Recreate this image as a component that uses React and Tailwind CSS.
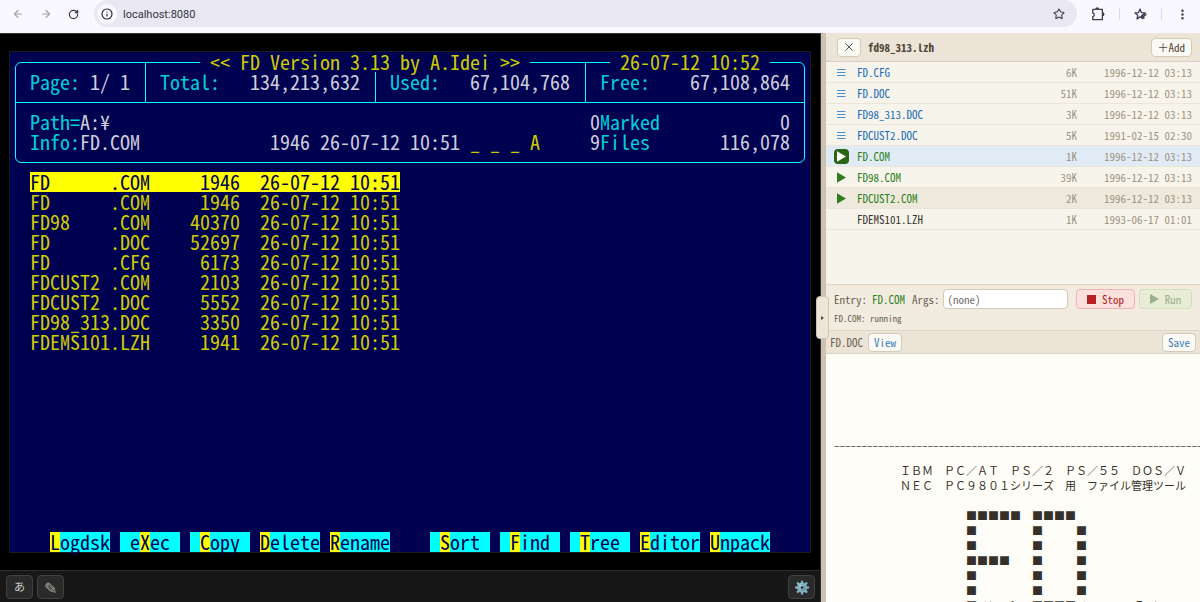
import React from "react";
import { ArrowLeft, ArrowRight, RotateCw, Info, Star, EllipsisVertical } from "lucide-react";

const archiveFiles = [
  { name: "FD.CFG", size: "6K", date: "1996-12-12 03:13", kind: "text" },
  { name: "FD.DOC", size: "51K", date: "1996-12-12 03:13", kind: "text" },
  { name: "FD98_313.DOC", size: "3K", date: "1996-12-12 03:13", kind: "text" },
  { name: "FDCUST2.DOC", size: "5K", date: "1991-02-15 02:30", kind: "text" },
  { name: "FD.COM", size: "1K", date: "1996-12-12 03:13", kind: "program", running: true },
  { name: "FD98.COM", size: "39K", date: "1996-12-12 03:13", kind: "program" },
  { name: "FDCUST2.COM", size: "2K", date: "1996-12-12 03:13", kind: "program", hovered: true },
  { name: "FDEMS101.LZH", size: "1K", date: "1993-06-17 01:01", kind: "other" },
];

const dosFiles = [
  ["FD", "COM", "1946"],
  ["FD", "COM", "1946"],
  ["FD98", "COM", "40370"],
  ["FD", "DOC", "52697"],
  ["FD", "CFG", "6173"],
  ["FDCUST2", "COM", "2103"],
  ["FDCUST2", "DOC", "5552"],
  ["FD98_313", "DOC", "3350"],
  ["FDEMS101", "LZH", "1941"],
];

// [text before the hot key, hot key, text after it]
const leftKeys = [
  ["", "L", "ogdsk"],
  [" e", "X", "ec "],
  [" ", "C", "opy "],
  ["", "D", "elete"],
  ["", "R", "ename"],
];
const rightKeys = [
  [" ", "S", "ort "],
  [" ", "F", "ind "],
  [" ", "T", "ree "],
  ["", "E", "ditor"],
  ["", "U", "npack"],
];

const indent = " ".repeat(24);
const docText = [
  "",
  "",
  "",
  "",
  "",
  "_".repeat(76),
  "",
  " ".repeat(12) + "ＩＢＭ　ＰＣ／ＡＴ　ＰＳ／２　ＰＳ／５５　ＤＯＳ／Ｖ",
  " ".repeat(12) + "ＮＥＣ　ＰＣ９８０１シリーズ　用　ファイル管理ツール",
  "",
  indent + "■■■■■　■■■■",
  indent + "■　　　　　■　　　■",
  indent + "■　　　　　■　　　■",
  indent + "■■■■　　■　　　■",
  indent + "■　　　　　■　　　■",
  indent + "■　　　　　■　　　■",
  indent + "■ ile  &   ■■■■ irectory  Tools",
].join("\n");

function Browser() {
  return (
    <header className="flex h-[33px] shrink-0 items-start bg-[#faf8ff] text-[#3c3c50]">
      <nav className="flex h-7 w-[94px] items-center gap-4 pl-3" aria-label="Browser">
        <button aria-label="Back" className="text-[#a3a2a8]"><ArrowLeft size={12} strokeWidth={2.2} /></button>
        <button aria-label="Forward" className="text-[#a3a2a8]"><ArrowRight size={12} strokeWidth={2.2} /></button>
        <button aria-label="Reload"><RotateCw size={11} strokeWidth={2.8} /></button>
      </nav>
      <div className="flex h-[27px] flex-1 items-center rounded-full bg-[#e9e8f2] pl-[3px] pr-3">
        <button aria-label="Site information" className="flex size-5 items-center justify-center rounded-full bg-[#faf8ff] text-[#222]">
          <Info size={12} strokeWidth={2.2} />
        </button>
        <input
          aria-label="Address"
          defaultValue="localhost:8080"
          className="ml-[6px] h-[27px] min-w-0 flex-1 bg-transparent pt-[2px] font-[Roboto,sans-serif] text-[11px] text-[#333340] outline-none"
        />
        <button aria-label="Bookmark"><Star size={12} strokeWidth={2.2} /></button>
      </div>
      <div className="flex h-7 w-[123px] items-center pl-[14px]">
        <button aria-label="Extensions">
          <svg className="h-[14px] w-[15px]" viewBox="0 0 15 14" fill="none" stroke="currentColor" strokeWidth="1.3" strokeLinejoin="round">
            <path d="M1.8 2.4h3.1c.2-1.7 2.5-1.7 2.7 0h3.8v3.4c1.9.1 1.9 2.7 0 2.8v4H1.8V9.6c2-.3 2-3.4 0-3.7z" />
            <path d="M5.1 2.2c.3-1.3 2-1.3 2.3 0zM11.5 6c1.4.3 1.4 2.2 0 2.5z" fill="currentColor" />
          </svg>
        </button>
        <span className="ml-[13px] mr-[14px] h-3 w-px bg-[#d5daf8]" />
        <button aria-label="Favourites">
          <svg className="h-3 w-[13px]" viewBox="0 0 13 12" fill="none" stroke="currentColor" strokeWidth="1.3" strokeLinejoin="round" strokeLinecap="round">
            <path d="M8.2 7.4 9 10.7 6 8.9 3 10.9l.8-3.6L1 4.9l3.6-.3L6 1.1l1.4 3.5 3.8.3-3.6 3.1" />
            <path d="M7.4 8.3 10.8 5.4M10 10.2l-.5-1.7 2.5-2" />
          </svg>
        </button>
        <span className="ml-[14px] mr-[14px] h-3 w-px bg-[#d5daf8]" />
        <button aria-label="Browser menu"><EllipsisVertical size={13} strokeWidth={2.6} /></button>
      </div>
    </header>
  );
}

function Stat({ label, value, className }) {
  return (
    <div className={"flex justify-between whitespace-pre pl-[14px] pt-[9px] " + className}>
      <span>{label}</span>
      <span className="text-[#cdcdda]">{value}</span>
    </div>
  );
}

function KeyGroup({ keys }) {
  return (
    <div className="flex gap-[10px]">
      {keys.map(([before, hot, after]) => (
        <button key={hot} className="h-5 w-[60px] whitespace-pre bg-[#00ffff] text-left leading-5 text-[#000050]">
          {before}
          <span className="inline-block h-5 bg-[#ffff00] align-top">{hot}</span>
          {after}
        </button>
      ))}
    </div>
  );
}

function Terminal() {
  return (
    <div className="flex h-[502px] w-[802px] max-w-full flex-col border border-[#1c1c1c] bg-[#000050] text-[20px] leading-5 text-[#00d0d8]">
      <section className="relative mx-[5px] mt-[10px] h-[101px] shrink-0 rounded-md border border-[#00ffff]">
        <div className="absolute -top-[11px] left-[184px] whitespace-pre bg-[#000050] px-[10px] text-[#cccc00]">
          {"<< FD Version 3.13 by A.Idei >>"}
        </div>
        <div className="absolute -top-[11px] right-[34px] bg-[#000050] px-[10px] text-[#cccc00]">26-07-12 10:52</div>
        <div className="flex h-10 border-b border-[#00ffff]">
          <Stat label="Page:" value="1/ 1" className="w-[130px] border-r border-[#00ffff] pr-[15px]" />
          <Stat label="Total:" value="134,213,632" className="w-[230px] border-r border-[#00ffff] pr-[15px]" />
          <Stat label="Used:" value="67,104,768" className="w-[210px] border-r border-[#00ffff] pr-[15px]" />
          <Stat label="Free:" value="67,108,864" className="flex-1 pr-[14px]" />
        </div>
        <div className="flex justify-between px-[14px] pt-[9px]">
          <div>
            <div>Path=<span className="text-[#cdcdda]">A:¥</span></div>
            <div className="flex">
              <span className="w-[240px]">Info:<span className="text-[#cdcdda]">FD.COM</span></span>
              <span className="text-[#cdcdda]">1946 26-07-12 10:51</span>
              <span className="ml-[10px] text-[#cccc00]">_ _ _ A</span>
            </div>
          </div>
          <div className="w-[200px]">
            <div className="flex justify-between"><span><span className="text-[#cdcdda]">0</span>Marked</span><span className="text-[#cdcdda]">0</span></div>
            <div className="flex justify-between"><span><span className="text-[#cdcdda]">9</span>Files</span><span className="text-[#cdcdda]">116,078</span></div>
          </div>
        </div>
      </section>
      <table className="ml-5 mt-[9px] w-[370px] table-fixed border-collapse text-[#cccc00]">
        <tbody>
          {dosFiles.map(([name, ext, size], i) => (
            <tr key={i} className={i === 0 ? "bg-[#ffff00] text-[#000050]" : ""}>
              <td className="h-5 w-20 p-0">{name}</td>
              <td className="h-5 w-10 p-0">.{ext}</td>
              <td className="h-5 w-[90px] p-0 text-right">{size}</td>
              <td className="h-5 w-40 p-0 text-right">26-07-12 10:51</td>
            </tr>
          ))}
        </tbody>
      </table>
      <nav className="mt-auto flex justify-between pl-10 pr-10" aria-label="Function keys">
        <KeyGroup keys={leftKeys} />
        <KeyGroup keys={rightKeys} />
      </nav>
    </div>
  );
}

const toolButton = "flex h-6 w-[27px] items-center justify-center rounded border border-[#404040] bg-[#2a2a2a] text-[11px] leading-none text-[#cfcfcf]";

function Emulator() {
  return (
    <main className="flex min-w-0 flex-1 flex-col border-r border-t border-[#333] bg-black">
      <div className="flex min-h-0 flex-1 items-center justify-center">
        <Terminal />
      </div>
      <div className="flex h-8 shrink-0 items-center gap-1 border-t border-[#2c2c2c] bg-[#171717] pl-[6px] pr-[5px]">
        <button className={toolButton}>あ</button>
        <button className={toolButton} aria-label="Draw"><span className="font-['Noto_Sans_CJK_JP',sans-serif] text-[16px] text-[#a8a8a8]">✎</span></button>
        <button className={toolButton + " ml-auto"} aria-label="Settings"><span className="text-[13px]">⚙️</span></button>
      </div>
    </main>
  );
}

function FileIcon({ file }) {
  if (file.kind === "text") {
    return (
      <svg className="ml-[3px] size-[9px] text-[#4a90cc]" viewBox="0 0 9 9" stroke="currentColor" strokeWidth="1">
        <path d="M0 1.5h8.5M0 4.5h8.5M0 7.5h8.5" />
      </svg>
    );
  }
  if (file.kind === "program") {
    return (
      <button
        aria-label={"Run " + file.name}
        className={"flex size-[15px] items-center justify-center rounded-sm " + (file.running ? "bg-[#2a6414] text-white" : "text-[#2e7d1e]")}
      >
        <svg className="h-[11px] w-[9px]" viewBox="0 0 9 11" fill="currentColor"><path d="M0 .3 9 5.5 0 10.7z" /></svg>
      </button>
    );
  }
  return null;
}

const nameColor = { text: "text-[#1a6cb8]", program: "text-[#2a8020]", other: "text-[#3a352c]" };
const lightButton = "h-[19px] rounded-sm border border-[#d3cbb8] bg-[#fbf9f3] leading-4";

function SidePanel() {
  return (
    <aside className="flex w-[374px] shrink-0 flex-col bg-[#f7f4ec] text-[11px] leading-[15px] text-[#6a6252]">
      <div className="flex h-[29px] shrink-0 items-center border-b border-[#d9d0c0] bg-[#ece4d7] pl-[11px] pr-2">
        <button aria-label="Close" className={lightButton + " flex w-6 items-center justify-center text-[#555]"}>
          <svg className="size-2" viewBox="0 0 8 8" stroke="currentColor" strokeWidth="1"><path d="m.5.5 7 7m0-7-7 7" /></svg>
        </button>
        <h1 className="ml-[7px] font-bold text-[#4e4636]">fd98_313.lzh</h1>
        <button className={lightButton + " ml-auto px-[6px] text-[#4e4636]"}>＋Add</button>
      </div>

      <div className="min-h-0 flex-1">
        <table className="w-full table-fixed border-separate border-spacing-0">
          <tbody>
            {archiveFiles.map((f) => (
              <tr
                key={f.name}
                className={"*:border-b *:border-[#ece5d8] " + (f.running ? "bg-[#e1ebf6]" : f.hovered ? "bg-[#efe9dd]" : "")}
              >
                <td className="h-[21px] w-[31px] p-0 pl-2 align-middle"><FileIcon file={f} /></td>
                <td className={"p-0 " + nameColor[f.kind]}>{f.name}</td>
                <td className="w-12 p-0 text-right text-[#9c9482]">{f.size}</td>
                <td className="w-[123px] p-0 pr-2 text-right text-[#9c9482]">{f.date}</td>
              </tr>
            ))}
          </tbody>
        </table>
      </div>

      <section className="flex h-[46px] shrink-0 flex-col border-t border-[#ddd5c6] bg-[#f2ebe0] pl-2 pr-2 pt-1">
        <div className="flex h-5 items-center">
          <span>Entry:</span>
          <span className="ml-[5px] text-[#2a8020]">FD.COM</span>
          <label htmlFor="args" className="ml-[7px]">Args:</label>
          <input
            id="args"
            placeholder="(none)"
            className="ml-[3px] h-5 min-w-0 flex-1 rounded-sm border border-[#d3cbb8] bg-white px-1 outline-none placeholder:text-[#77716a]"
          />
          <button className="ml-2 flex h-5 w-[59px] items-center justify-center gap-[6px] rounded-sm border border-[#f0b4b4] bg-[#fbe0de] text-[#b52020]">
            <span className="size-[9px] bg-[#b52020]" />Stop
          </button>
          <button disabled className="ml-1 flex h-5 w-[53px] items-center justify-center gap-[6px] rounded-sm border border-[#d3deba] bg-[#e8edd6] text-[#9cb088]">
            <svg className="h-[10px] w-[9px]" viewBox="0 0 9 10" fill="currentColor"><path d="M0 0 9 5 0 10z" /></svg>Run
          </button>
        </div>
        <p className="mt-[2px] text-[9px]">FD.COM: running</p>
      </section>

      <div className="flex h-6 shrink-0 items-center border-y border-[#ddd5c6] bg-[#ece4d7] pl-1 pr-1">
        <h2>FD.DOC</h2>
        <button className={lightButton + " ml-[5px] px-[5px] text-[#3a80b8]"}>View</button>
        <button className={lightButton + " ml-auto px-[5px] text-[#3a80b8]"}>Save</button>
      </div>
      <pre className="h-[248px] shrink-0 overflow-hidden bg-[#fffdf7] pl-2 pt-1 font-[inherit] text-[#35312a]">{docText}</pre>
    </aside>
  );
}

export default function App() {
  return (
    <div className="flex h-screen flex-col overflow-hidden font-['Noto_Sans_Mono_CJK_JP','Noto_Sans_CJK_JP',monospace]">
      <Browser />
      <div className="flex min-h-0 flex-1">
        <Emulator />
        <div className="relative w-[5px] shrink-0 bg-[#cdc1b3]">
          <button
            aria-label="Collapse panel"
            className="absolute top-[263px] -left-[5px] flex h-[43px] w-[13px] items-center justify-center rounded border border-[#cdc5b2] bg-[#ede5d8] text-[#4e4636]"
          >
            <svg className="h-1 w-[3px]" viewBox="0 0 3 4" fill="currentColor"><path d="M0 0 3 2 0 4z" /></svg>
          </button>
        </div>
        <SidePanel />
      </div>
    </div>
  );
}
